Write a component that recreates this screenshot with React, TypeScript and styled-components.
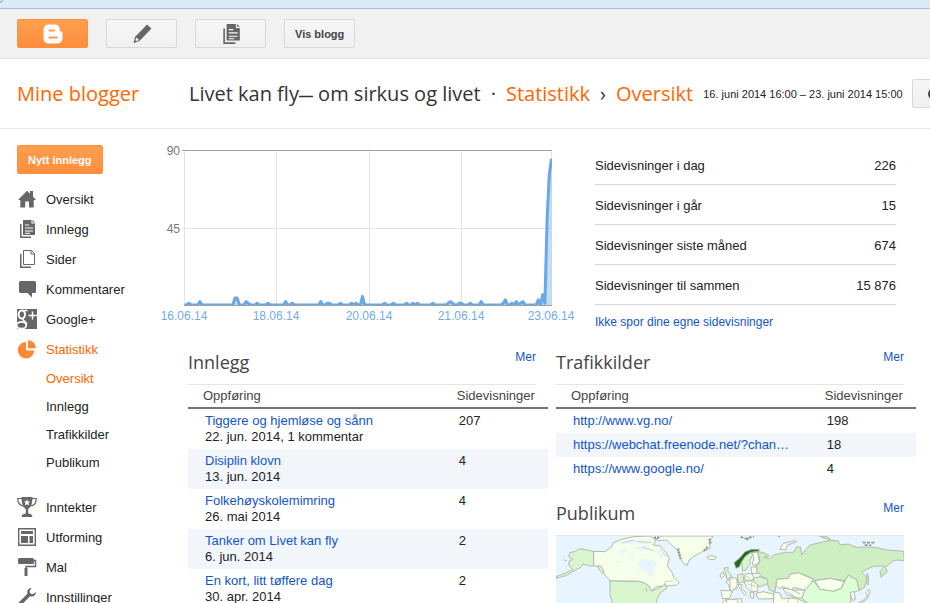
import React from 'react';
import styled, { createGlobalStyle, css } from 'styled-components';

const GlobalStyle = createGlobalStyle`
  html { scrollbar-width: none; }
  body {
    margin: 0;
    background: #fff;
    color: #222;
    font: 13px/16px "Liberation Sans", Arial, sans-serif;
  }
  *, *::before, *::after { box-sizing: border-box; }
  a { color: #15c; text-decoration: none; }
`;

const Page = styled.div`
  overflow: hidden;
`;

const BrowserEdge = styled.div`
  height: 9px;
  background: #dceaf8;
  border-bottom: 1px solid #a6bfd6;
  svg { display: block; }
`;

const Toolbar = styled.nav`
  display: flex;
  gap: 18px;
  padding: 10px 17px;
  background: #f1f1f1;
  border-bottom: 1px solid #e5e5e5;
`;

const Button = styled.button<{ $primary?: boolean; $wide?: boolean }>`
  display: inline-flex;
  align-items: center;
  justify-content: center;
  flex: none;
  height: 29px;
  padding: 0 10px;
  border: 1px solid #d8d8d8;
  border-radius: 2px;
  background: linear-gradient(#f6f6f6, #f0f0f0);
  color: #444;
  font: bold 11px/16px "Liberation Sans", Arial, sans-serif;
  white-space: nowrap;
  svg { color: #666; }
  ${p => p.$wide && css`width: 71px;`}
  ${p => p.$primary && css`
    border-color: #fb8f3d;
    background: linear-gradient(#ff9f50, #ff8d3c);
    color: #fff;
    svg { color: #fff; }
  `}
`;

const Header = styled.header`
  display: flex;
  align-items: center;
  height: 70px;
  border-bottom: 1px solid #e8e8e8;
  white-space: nowrap;
`;

const HeaderHome = styled.div`
  flex: none;
  width: 189px;
  padding-left: 17px;
  font: 20px/28px "Open Sans", sans-serif;
  a { color: #f60; }
`;

const Crumbs = styled.h1`
  display: flex;
  gap: 10px;
  flex: none;
  margin: 0;
  font: 20px/28px "Open Sans", sans-serif;
  color: #333;
  a { color: #f60; }
`;

const Dash = styled.span`
  font: bold 14px/20px "Liberation Sans", Arial, sans-serif;
`;

const Period = styled.span`
  flex: none;
  margin: 0 9px 0 10px;
  font-size: 11px;
`;

const Body = styled.div`
  display: flex;
  padding-top: 16px;
`;

const Sidebar = styled.aside`
  flex: none;
  width: 160px;
  padding-left: 17px;
`;

const NavList = styled.ul<{ $gap: number }>`
  list-style: none;
  margin: ${p => p.$gap}px 0 0;
  padding: 0;
`;

const NavLink = styled.a<{ $active?: boolean; $sub?: boolean }>`
  display: flex;
  align-items: center;
  gap: 9px;
  height: ${p => (p.$sub ? 28 : 30)}px;
  padding-left: ${p => (p.$sub ? 29 : 0)}px;
  color: ${p => (p.$active ? '#f60' : '#222')};
  svg { flex: none; color: ${p => (p.$active ? '#ff8833' : '#666')}; }
  span { padding-top: 2px; }
`;

const Main = styled.main`
  flex: 1;
  min-width: 0;
`;

const Overview = styled.div`
  display: flex;
  gap: 15px;
  padding-right: 34px;
`;

const ChartSvg = styled.svg`
  flex: none;
  display: block;
  font: 12px "Liberation Sans", Arial, sans-serif;
`;

const Totals = styled.div`
  flex: 1;
`;

const TotalsTable = styled.table`
  width: 100%;
  border-collapse: separate;
  border-spacing: 0;
  th, td {
    height: 40px;
    padding: 2px 0 0;
    border-bottom: 1px solid #d5d5d5;
    font-weight: normal;
    text-align: left;
  }
  td { text-align: right; }
`;

const TrackingLink = styled.a`
  display: block;
  margin-top: 9px;
  font-size: 12px;
`;

const Columns = styled.div`
  display: grid;
  grid-template-columns: 1fr 1fr;
  align-items: start;
  gap: 8px;
  margin-top: 10px;
  padding: 0 14px 0 28px;
`;

const Stack = styled.div`
  display: grid;
  gap: 10px;
`;

const PanelHead = styled.div`
  display: flex;
  justify-content: space-between;
  align-items: flex-start;
  margin-right: 12px;
  border-bottom: 1px solid #e5e5e5;
  h2 {
    margin: 0;
    font: 18px/44px "Open Sans", sans-serif;
    color: #444;
  }
  a { margin-top: 9px; font-size: 12px; }
`;

const ListTable = styled.table`
  width: 100%;
  table-layout: fixed;
  border-collapse: separate;
  border-spacing: 0;
  th {
    height: 24px;
    padding: 0 0 0 15px;
    border-bottom: 2px solid #6f757c;
    color: #444;
    font-weight: normal;
    text-align: left;
  }
  td { padding: 4px 0 4px 17px; vertical-align: top; }
  th:first-child { width: 70.5%; }
  tbody tr:nth-child(even) { background: #f2f6fb; }
`;

const PostLink = styled.a`
  display: block;
`;

const MapSvg = styled.svg`
  display: block;
  width: calc(100% - 12px);
  height: auto;
`;

/* ---------- icons ---------- */

const Icon = ({ children, size = 20 }: { children: React.ReactNode; size?: number }) => (
  <svg width={size} height={size} viewBox="0 0 20 20" fill="currentColor" aria-hidden="true">{children}</svg>
);

const HomeIcon = () => (
  <Icon><path d="M1 11 10 1.8l3 3V2h3v5.5l3 3.5h-2.3v7.6H12v-6.1H8.200v6.1H3.300V11z" /></Icon>
);

const PostsIcon = ({ size }: { size?: number }) => (
  <Icon size={size}>
    <path d="M3 5h1.500v12.500H14V19H3z" />
    <path d="M6 1h8.500v3.500H18V16H6z" />
    <path d="M15.500 1 18 3.500h-2.500z" />
    <path d="M8 6h4M8 9h8M8 12h8M8 14.300h5" stroke="#fff" strokeWidth="1" />
  </Icon>
);

const PagesIcon = () => (
  <Icon>
    <path d="M3 5h1.500v12.500H14V19H3z" />
    <path d="M6.500 1.500h8l3 3v11h-11zM14 1.500V5h3.500" fill="none" stroke="currentColor" />
  </Icon>
);

const CommentIcon = () => (
  <Icon><path d="M3.500 2h14A1.500 1.500 0 0 1 19 3.500v9a1.500 1.500 0 0 1-1.500 1.500H15v4.500L10.500 14h-7A1.500 1.500 0 0 1 2 12.500v-9A1.500 1.500 0 0 1 3.500 2z" /></Icon>
);

const PlusIcon = () => (
  <Icon>
    <path d="M0 0h20v20H0z" />
    <g fill="none" stroke="#fff">
      <ellipse cx="4.800" cy="5.500" rx="3.200" ry="4" strokeWidth="2" />
      <path d="M6 1.500h4.500M6.500 9.500c-2 2 2.800 2.600 3.200 5.500" strokeWidth="1.500" />
      <ellipse cx="4.500" cy="16.300" rx="4.800" ry="3.400" strokeWidth="1.800" />
      <path d="M15.500 2.500v8M11.500 6.500H20" strokeWidth="1.500" />
    </g>
  </Icon>
);

const PieIcon = () => (
  <Icon><path d="M9 3v8.500h8.200A8.200 8.200 0 1 1 9 3z" /><path d="M11 1a8.200 8.200 0 0 1 8 8.300h-8z" /></Icon>
);

const TrophyIcon = () => (
  <Icon>
    <path d="M4.500 0h11c0 7-1.500 10-4.300 12v4.500c2 .3 3.300.8 4 2V20H4.800v-1.500c.7-1.200 2-1.700 4-2V12C6 10 4.500 7 4.500 0z" />
    <path d="M5 1.500H.7C.8 6 3 8.700 6.500 9M15 1.500h4.300C19.200 6 17 8.700 13.500 9" fill="none" stroke="currentColor" strokeWidth="1.200" />
    <path d="m10 2.300.9 2.100 2.300.2-1.700 1.500.5 2.300-2-1.200-2 1.200.5-2.300-1.700-1.500 2.300-.2z" fill="#fff" />
  </Icon>
);

const LayoutIcon = () => (
  <Icon>
    <path d="M1.700 1.700h16.600v16.600H1.700z" fill="none" stroke="currentColor" strokeWidth="1.400" />
    <path d="M4 4h12v3H4zM4 9h7v7H4zM12.500 9H16v7h-3.500z" />
  </Icon>
);

const RollerIcon = () => (
  <Icon>
    <rect x="1" y="1" width="16" height="6" rx="1.500" />
    <path d="M17 3.500h1.500v6H9V12" fill="none" stroke="currentColor" strokeWidth="1.400" />
    <path d="M7.500 11h3v8h-3z" />
  </Icon>
);

const WrenchIcon = () => (
  <Icon><path d="M14.500 1c-3 0-5 2.700-4 5.700L1.200 16c-.8 1 1.300 3.400 2.600 2.600l9.300-9.300c3 1 6-1 5.900-4.200L16 7.300l-2.700-.8-.7-2.500z" /></Icon>
);

const PencilIcon = () => (
  <Icon><path d="m15 .500 4.500 4L7.500 17l-6 2.200L3 13z" /><path d="m4.300 13.500 2.800 2.600-2.600 1.100-1.100-1.100z" fill="#f1f1f1" /></Icon>
);

const BloggerIcon = () => (
  <Icon>
    <path d="M6 .500h5.500c3.300 0 5.300 2.300 5.300 5v1c0 .7.600 1 1.200 1 .9 0 1.500.4 1.500 1.300V14c0 3.300-2.200 5.500-5.500 5.500H6C2.700 19.500.500 17.300.500 14V6C.500 2.700 2.700.500 6 .500z" />
    <path d="M6.500 6.500H11M6.500 13.500h7.200" stroke="#ff9748" strokeWidth="2" strokeLinecap="round" />
  </Icon>
);

/* ---------- page view chart ---------- */

/** Hour index since 16 June 16:00 -> page views; hours left out had none. */
const hourlyViews: Record<number, number> = {
  2: 1, 7: 2, 23: 4, 24: 4, 28: 2, 29: 1, 33: 1, 38: 1, 46: 2, 49: 1, 62: 2, 65: 1, 66: 1,
  71: 1, 76: 1, 78: 1, 81: 5, 91: 1, 95: 1, 101: 1, 104: 1, 106: 1, 113: 1, 120: 1, 121: 2,
  122: 1, 125: 1, 126: 1, 130: 1, 135: 2, 145: 1, 146: 3, 149: 1, 151: 2, 153: 1, 154: 2,
  161: 3, 163: 6, 164: 1, 165: 50, 166: 76, 167: 85,
};

const days = [
  { label: '16.06.14', x: 24 },
  { label: '18.06.14', x: 116 },
  { label: '20.06.14', x: 209 },
  { label: '21.06.14', x: 301 },
  { label: '23.06.14', x: 391 },
];

const ViewsChart = () => {
  const left = 24.5;
  const base = 160;
  const points = Array.from({ length: 168 }, (_, i) =>
    `${(left + (i * 367) / 167).toFixed(1)},${(base - (hourlyViews[i] ?? 0) * 1.72).toFixed(1)}`).join(' ');
  return (
    <ChartSvg width="420" height="185" viewBox="0 0 420 185" role="img" aria-label="Sidevisninger">
      <clipPath id="plot"><rect x="24" y="0" width="368" height="160" /></clipPath>
      <g stroke="#e3e3e3">
        {days.map(d => <path key={d.label} d={`M${d.x + 0.5} 6V160`} />)}
        <path d="M22 83.500H392" />
      </g>
      <path d="M22 5.500H392M24 160.500H392" stroke="#a0a0a0" />
      <g clipPath="url(#plot)">
        <polygon points={`${left},160 ${points} 391.5,160`} fill="#6aa9e9" fillOpacity=".4" />
        <polyline points={points} fill="none" stroke="#69a8e8" strokeWidth="3" strokeLinejoin="round" />
      </g>
      <g fill="#777" textAnchor="end">
        <text x="20" y="10">90</text>
        <text x="20" y="88">45</text>
      </g>
      <g fill="#72abe6" textAnchor="middle">
        {days.map(d => <text key={d.label} x={d.x} y="175">{d.label}</text>)}
      </g>
    </ChartSvg>
  );
};

/* ---------- audience map ---------- */

const CREAM = '#f6ffe9';
const PALE = '#d7f6ce';
const RUSSIA = '#cdefc1';
const CHINA = '#dcffd5';

const americas: [string, string][] = [
  [PALE, 'M131,184L131,227 118,228 100,222 92,232 70,243 50,256 18,266 18,260 45,250 68,238 58,228 56,215 68,208 56,200 60,188 75,184 90,176 110,180Z'],
  [CREAM, 'M131,184L165,185 185,170 190,158 215,148 250,140 300,138 318,150 310,165 330,168 350,190 358,205 352,228 365,245 372,262 388,278 380,285 362,287 345,288 318,290 305,303 298,290 285,280 265,274 180,273 165,255 150,232 131,227Z'],
  [PALE, 'M143,227L152,228 162,243 158,250 148,240Z'],
  [PALE, 'M180,273L265,274 285,280 298,290 305,303 335,290 345,282 351,294 332,308 322,325 317,345 190,345 180,315Z'],
  [CREAM, 'M318,147L335,138 490,138 478,155 480,175 455,186 430,200 417,210 412,226 400,220 388,200 384,182 365,165 350,150 325,152Z'],
  [CREAM, 'M470,202L484,196 500,202 492,209 476,208Z'],
  [PALE, 'M522,234L535,232 533,242 540,250 547,262 532,269 528,255Z'],
  [CREAM, 'M512,250L520,246 523,258 516,263 510,260Z'],
  [CREAM, 'M527,276L545,264 562,271 558,285 562,296 540,300 536,284Z'],
  [CREAM, 'M513,301L548,303 538,325 518,326Z'],
  [CREAM, 'M510,345L524,330 556,327 575,326 575,345Z'],
];

const eurasia: [string, string][] = [
  [RUSSIA, 'M84,184L105,190 118,197 102,202 118,206 135,193 150,191 162,187 190,187 200,170 212,172 215,195 226,180 240,165 275,157 300,151 325,153 330,165 355,162 380,172 410,171 440,173 470,180 500,182 522,184 522,212 505,210 490,212 475,225 465,230 472,245 453,262 450,245 462,228 430,229 410,238 395,247 410,262 405,290 388,302 380,270 355,255 345,272 300,265 255,272 240,262 205,248 180,253 175,265 140,268 138,285 135,305 118,300 112,280 110,265 95,260 80,242 80,228 90,215Z'],
  [PALE, 'M35,215L45,200 62,187 68,194 60,210 60,220 48,240 38,243Z'],
  [CREAM, 'M66,188L83,186 88,215 78,226 66,223 72,205Z'],
  ['#216b1c', 'M12,218L28,205 45,185 65,178 88,178 86,184 62,187 45,200 35,215 28,231 18,235Z'],
  [CREAM, 'M140,268L175,265 180,253 205,248 250,268 240,285 225,300 190,292 185,300 160,290 148,296 138,285Z'],
  [CREAM, 'M255,272L300,265 343,275 333,295 310,304 270,298Z'],
  [CHINA, 'M250,272L270,298 310,304 335,295 345,272 355,255 380,270 388,300 362,312 362,345 240,345 215,325 225,300Z'],
  [CREAM, 'M158,294L188,300 225,300 215,325 195,322 170,315Z'],
  [CREAM, 'M170,305L196,322M188,300L210,312'],
  [PALE, 'M70,265L90,260 112,268 114,280 92,290 70,282Z'],
  [CREAM, 'M44,253L65,250 72,265 64,272 45,270Z'],
  [PALE, 'M22,255L38,250 42,275 25,280Z'],
  [CREAM, 'M62,232L78,230 82,250 66,250Z'],
  [CREAM, 'M42,274L66,272 84,285 82,304 64,306 50,292Z'],
  [CREAM, 'M0,262L20,265 22,285 14,298 0,302Z'],
  [CREAM, 'M24,283L36,284 34,294 50,310 44,316 30,296Z'],
  [CREAM, 'M60,306L72,308 70,326 62,320Z'],
  [CREAM, 'M78,310L100,305 130,312 132,326 84,327Z'],
  [CREAM, 'M132,306L150,310 155,325 200,325 236,342 130,345Z'],
  [CREAM, 'M-10,328L20,328 30,345 -10,345Z'],
  [CREAM, 'M150,178L160,160 195,152 200,156 172,165 168,179Z'],
  [RUSSIA, 'M268,138L290,140 302,148 285,146Z'],
  [CREAM, 'M405,328L412,318 408,308 417,298 420,305 412,326 394,340 386,338Z'],
  [RUSSIA, 'M411,250L416,262 414,285 410,275Z'],
  [CREAM, 'M360,308L372,304 376,328 368,332Z'],
];

const AudienceMap = () => (
  <MapSvg viewBox="0 0 1044 240" role="img" aria-label="Publikum">
    <path d="M0 0H1044V240H0z" fill="#e9f5fe" />
    <g stroke="#b4b8b0" strokeWidth="3" strokeLinejoin="round">
      <g transform="translate(-18 -138)">
        {americas.map(([fill, d]) => <path key={d} d={d} fill={fill} />)}
        <path d="M265,218 280,206 312,210 322,222 308,238 312,258 300,262 288,244 266,240ZM205,182 225,172 232,184 212,192ZM248,172 290,165 300,178 268,184ZM195,160 240,150 285,152 300,162 250,162ZM196,212 216,214 204,220ZM240,190 256,198 246,206ZM322,180 344,196 334,206 322,196Z" fill="#e9f5fe" stroke="none" />
        <path d="M215,158 255,150M262,154 305,158M278,172 312,182M330,178 350,200M345,288 345,275 370,272" fill="none" strokeWidth="2" />
        <path d="M384,176 392,206M478,146 482,162M462,182 474,170M312,143 328,143" fill="none" stroke="#8f938f" strokeWidth="7" strokeDasharray="6 3" />
        <path d="M41,209 50,213M288,292 290,304" fill="none" />
      </g>
      <g transform="translate(522 -138)">
        {eurasia.map(([fill, d]) => <path key={d} d={d} fill={fill} />)}
        <path d="M32,140 44,146 60,142 72,140M50,150 56,146M398,157 412,158 436,158M404,165 424,166M145,138 150,139" fill="none" stroke="#92968f" strokeWidth="5" strokeDasharray="9 4" />
        <path d="M48,258 62,268M52,282 80,290M64,274 66,304M145,306 156,318M176,322 174,345M200,326 206,345M54,318 60,326" fill="none" strokeWidth="2" />
      </g>
    </g>
  </MapSvg>
);

/* ---------- data ---------- */

const primaryNav = [
  { label: 'Oversikt', icon: <HomeIcon /> },
  { label: 'Innlegg', icon: <PostsIcon /> },
  { label: 'Sider', icon: <PagesIcon /> },
  { label: 'Kommentarer', icon: <CommentIcon /> },
  { label: 'Google+', icon: <PlusIcon /> },
  { label: 'Statistikk', icon: <PieIcon />, active: true },
];
const statsNav = ['Oversikt', 'Innlegg', 'Trafikkilder', 'Publikum'];
const settingsNav = [
  { label: 'Inntekter', icon: <TrophyIcon /> },
  { label: 'Utforming', icon: <LayoutIcon /> },
  { label: 'Mal', icon: <RollerIcon /> },
  { label: 'Innstillinger', icon: <WrenchIcon /> },
];
const totals = [
  ['Sidevisninger i dag', '226'],
  ['Sidevisninger i går', '15'],
  ['Sidevisninger siste måned', '674'],
  ['Sidevisninger til sammen', '15 876'],
];
const posts = [
  ['Tiggere og hjemløse og sånn', '22. jun. 2014, 1 kommentar', '207'],
  ['Disiplin klovn', '13. jun. 2014', '4'],
  ['Folkehøyskolemimring', '26. mai 2014', '4'],
  ['Tanker om Livet kan fly', '6. jun. 2014', '2'],
  ['En kort, litt tøffere dag', '30. apr. 2014', '2'],
];
const sources = [
  ['http://www.vg.no/', '198'],
  ['https://webchat.freenode.net/?chan…', '18'],
  ['https://www.google.no/', '4'],
];

const PanelTitle = ({ title }: { title: string }) => (
  <PanelHead><h2>{title}</h2><a href="#mer">Mer</a></PanelHead>
);

const ListHead = () => (
  <thead><tr><th scope="col">Oppføring</th><th scope="col">Sidevisninger</th></tr></thead>
);

export default function App() {
  return (
    <Page>
      <GlobalStyle />
      <BrowserEdge>
        <svg width="4" height="3" viewBox="0 0 4 3" aria-hidden="true"><path d="M0 2C2 2 2.500 1 2.500 0" fill="none" stroke="#8a97a6" /></svg>
      </BrowserEdge>
      <Toolbar>
        <Button $primary $wide aria-label="Blogger"><BloggerIcon /></Button>
        <Button $wide aria-label="Nytt innlegg"><PencilIcon /></Button>
        <Button $wide aria-label="Innlegg"><PostsIcon size={22} /></Button>
        <Button>Vis blogg</Button>
      </Toolbar>
      <Header>
        <HeaderHome><a href="#blogger">Mine blogger</a></HeaderHome>
        <Crumbs>
          <span>Livet kan fly<Dash>—</Dash> om sirkus og livet</span>
          <span>·</span>
          <a href="#statistikk">Statistikk</a>
          <span>›</span>
          <a href="#oversikt">Oversikt</a>
        </Crumbs>
        <Period>16. juni 2014 16:00 – 23. juni 2014 15:00</Period>
        <Button $wide aria-label="Periode">
          <svg width="40" height="16" viewBox="0 0 40 16" aria-hidden="true"><circle cx="7" cy="8" r="5" fill="none" stroke="#444" strokeWidth="2" /></svg>
        </Button>
      </Header>
      <Body>
        <Sidebar>
          <Button $primary>Nytt innlegg</Button>
          <NavList $gap={10}>
            {primaryNav.map(n => (
              <li key={n.label}><NavLink href="#nav" $active={n.active}>{n.icon}<span>{n.label}</span></NavLink></li>
            ))}
          </NavList>
          <NavList $gap={0}>
            {statsNav.map((n, i) => (
              <li key={n}><NavLink href="#nav" $sub $active={i === 0}><span>{n}</span></NavLink></li>
            ))}
          </NavList>
          <NavList $gap={16}>
            {settingsNav.map(n => (
              <li key={n.label}><NavLink href="#nav">{n.icon}<span>{n.label}</span></NavLink></li>
            ))}
          </NavList>
        </Sidebar>
        <Main>
          <Overview>
            <ViewsChart />
            <Totals>
              <TotalsTable>
                <tbody>
                  {totals.map(([label, value]) => <tr key={label}><th scope="row">{label}</th><td>{value}</td></tr>)}
                </tbody>
              </TotalsTable>
              <TrackingLink href="#sporing">Ikke spor dine egne sidevisninger</TrackingLink>
            </Totals>
          </Overview>
          <Columns>
            <section>
              <PanelTitle title="Innlegg" />
              <ListTable>
                <ListHead />
                <tbody>
                  {posts.map(([title, meta, views]) => (
                    <tr key={title}><td><PostLink href="#innlegg">{title}</PostLink>{meta}</td><td>{views}</td></tr>
                  ))}
                </tbody>
              </ListTable>
            </section>
            <Stack>
              <section>
                <PanelTitle title="Trafikkilder" />
                <ListTable>
                  <ListHead />
                  <tbody>
                    {sources.map(([url, views]) => (
                      <tr key={url}><td><a href="#kilde">{url}</a></td><td>{views}</td></tr>
                    ))}
                  </tbody>
                </ListTable>
              </section>
              <section>
                <PanelTitle title="Publikum" />
                <AudienceMap />
              </section>
            </Stack>
          </Columns>
        </Main>
      </Body>
    </Page>
  );
}
